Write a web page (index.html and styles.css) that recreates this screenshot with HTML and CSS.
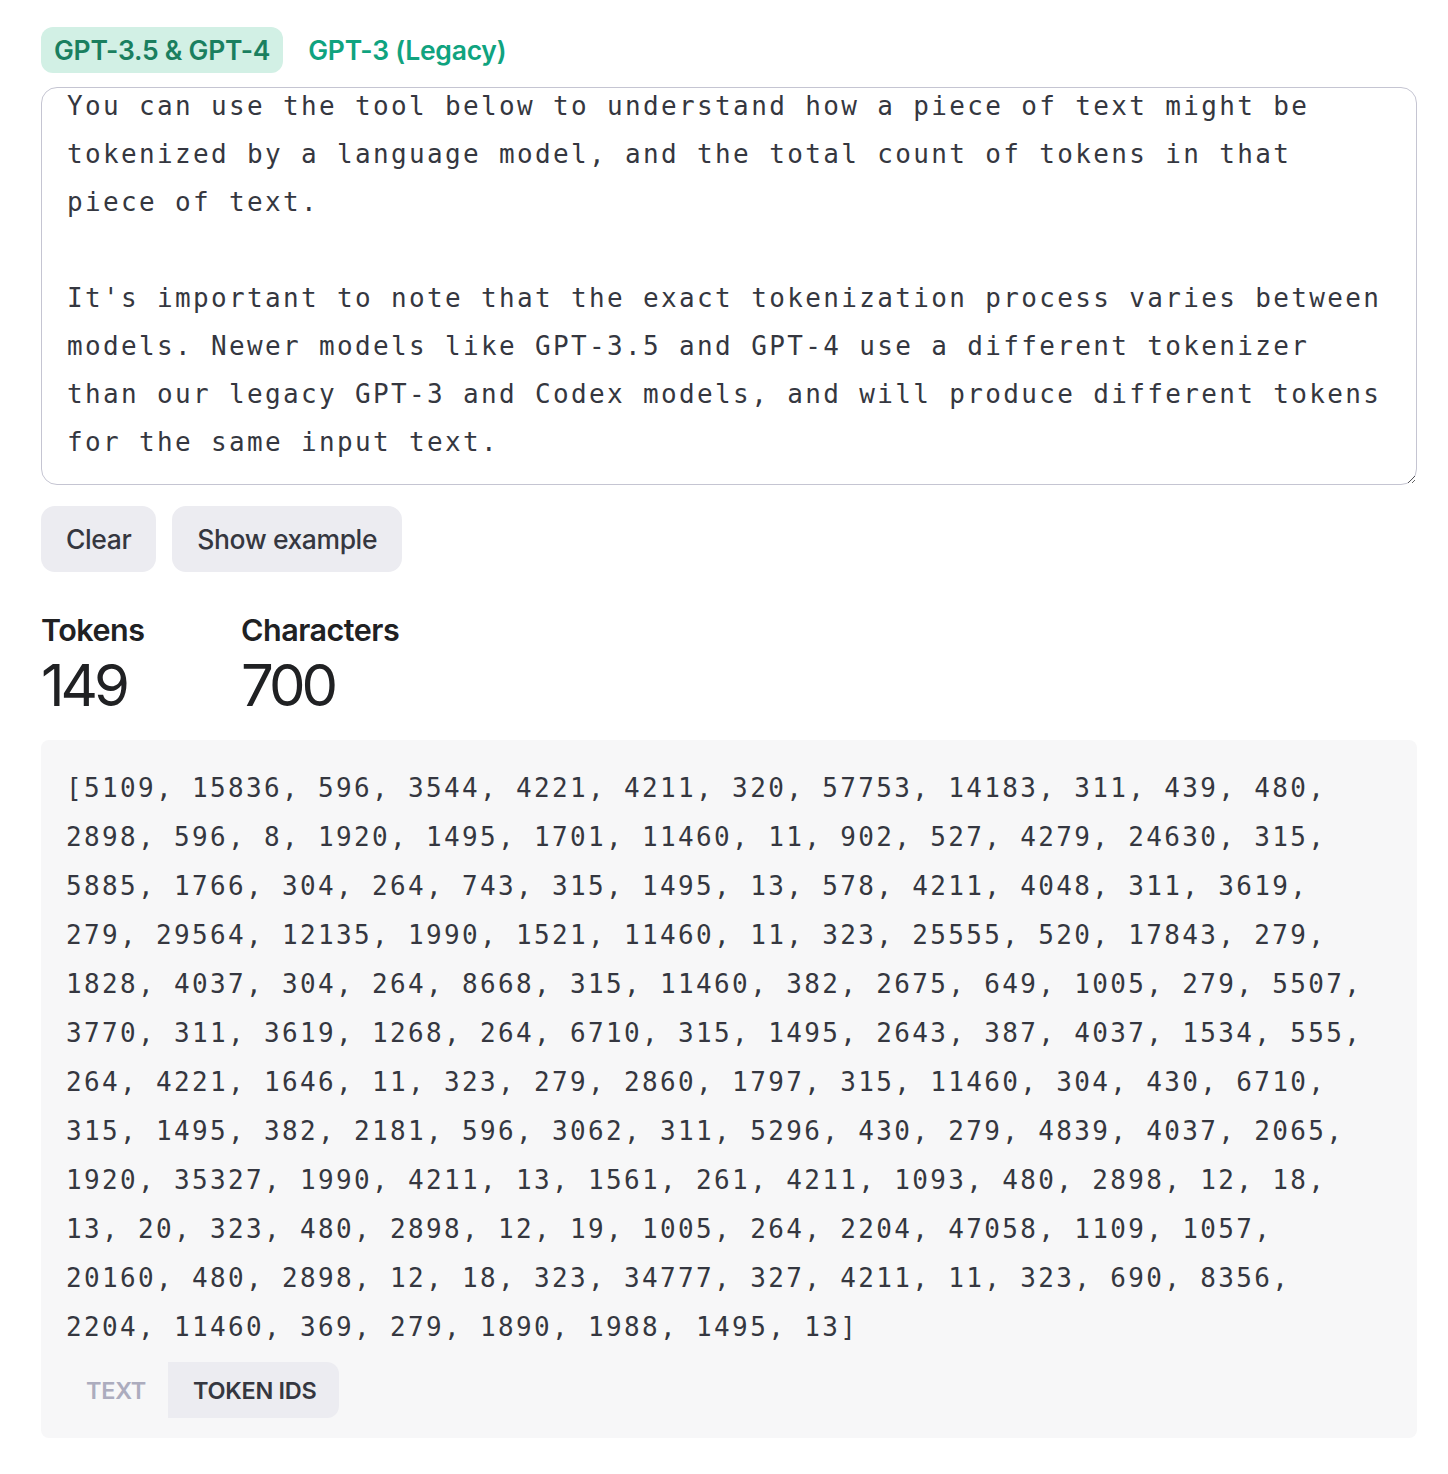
FILE: index.html
```html
<!DOCTYPE html>
<html lang="en">
<head>
<meta charset="utf-8">
<title>Tokenizer</title>
<link rel="stylesheet" href="styles.css">
<script src="script.js" defer></script>
</head>
<body>
<main class="page">
  <nav class="model-tabs">
    <button class="model-tab active">GPT-3.5 &amp; GPT-4</button>
    <button class="model-tab">GPT-3 (Legacy)</button>
  </nav>

  <textarea class="input" spellcheck="false">You can use the tool below to understand how a piece of text might be tokenized by a language model, and the total count of tokens in that piece of text.

It's important to note that the exact tokenization process varies between models. Newer models like GPT-3.5 and GPT-4 use a different tokenizer than our legacy GPT-3 and Codex models, and will produce different tokens for the same input text.</textarea>

  <div class="actions">
    <button class="btn">Clear</button>
    <button class="btn">Show example</button>
  </div>

  <div class="stats">
    <div class="stat stat-tokens">
      <div class="stat-label">Tokens</div>
      <div class="stat-value">149</div>
    </div>
    <div class="stat">
      <div class="stat-label">Characters</div>
      <div class="stat-value">700</div>
    </div>
  </div>

  <section class="output">
    <div class="token-ids">[5109, 15836, 596, 3544, 4221, 4211, 320, 57753, 14183, 311, 439, 480, 2898, 596, 8, 1920, 1495, 1701, 11460, 11, 902, 527, 4279, 24630, 315, 5885, 1766, 304, 264, 743, 315, 1495, 13, 578, 4211, 4048, 311, 3619, 279, 29564, 12135, 1990, 1521, 11460, 11, 323, 25555, 520, 17843, 279, 1828, 4037, 304, 264, 8668, 315, 11460, 382, 2675, 649, 1005, 279, 5507, 3770, 311, 3619, 1268, 264, 6710, 315, 1495, 2643, 387, 4037, 1534, 555, 264, 4221, 1646, 11, 323, 279, 2860, 1797, 315, 11460, 304, 430, 6710, 315, 1495, 382, 2181, 596, 3062, 311, 5296, 430, 279, 4839, 4037, 2065, 1920, 35327, 1990, 4211, 13, 1561, 261, 4211, 1093, 480, 2898, 12, 18, 13, 20, 323, 480, 2898, 12, 19, 1005, 264, 2204, 47058, 1109, 1057, 20160, 480, 2898, 12, 18, 323, 34777, 327, 4211, 11, 323, 690, 8356, 2204, 11460, 369, 279, 1890, 1988, 1495, 13]</div>
    <div class="view-toggle">
      <button class="seg seg-first">TEXT</button>
      <button class="seg seg-last active">TOKEN IDS</button>
    </div>
  </section>
</main>
</body>
</html>
```

FILE: styles.css
```css
* { box-sizing: border-box; }

html, body {
  margin: 0;
  padding: 0;
  background: #ffffff;
}

body {
  font-family: Inter, "Noto Sans", "Liberation Sans", sans-serif;
  color: #202123;
}

button {
  font-family: inherit;
  border: none;
  cursor: pointer;
}

.page {
  width: 1376px;
  margin-left: 41px;
  padding-top: 27px;
  display: flex;
  flex-direction: column;
}

.model-tabs {
  display: flex;
  gap: 12px;
  height: 46px;
}

.model-tab {
  background: transparent;
  color: #10a37f;
  font-size: 26.5px;
  font-weight: 600;
  letter-spacing: -0.25px;
  padding: 0 13px;
  border-radius: 12px;
  height: 46px;
}

.model-tab.active {
  background: #d2f0e5;
  color: #1a7f5f;
}

.input {
  margin-top: 14px;
  width: 100%;
  height: 398px;
  border: 1px solid #c5c5d2;
  border-radius: 16px;
  padding: 24px 30px 24px 25px;
  font-family: "DejaVu Sans Mono", "Liberation Mono", monospace;
  font-size: 26px;
  letter-spacing: 2.35px;
  line-height: 48px;
  color: #353740;
  overflow: hidden;
  resize: vertical;
  outline: none;
  display: block;
}

.actions {
  display: flex;
  gap: 16px;
  margin-top: 21px;
}

.btn {
  background: #ececf1;
  color: #353740;
  font-size: 26.5px;
  font-weight: 500;
  letter-spacing: -0.4px;
  height: 66px;
  padding: 0 25px;
  border-radius: 14px;
}

.stats {
  display: flex;
  margin-top: 40px;
}

.stat-tokens {
  width: 200px;
}

.stat-label {
  font-size: 30.5px;
  font-weight: 600;
  letter-spacing: -0.5px;
  line-height: 36px;
  margin-bottom: 4px;
  color: #202123;
}

.stat-value {
  font-size: 58px;
  font-weight: 400;
  letter-spacing: -4px;
  line-height: 66px;
  color: #202123;
}

.output {
  margin-top: 22px;
  background: #f7f7f8;
  border-radius: 8px;
  padding: 24px 40px 20px 25px;
}

.token-ids {
  font-family: "DejaVu Sans Mono", "Liberation Mono", monospace;
  font-size: 26px;
  letter-spacing: 2.35px;
  line-height: 49px;
  color: #353740;
}

.view-toggle {
  display: flex;
  margin-top: 10px;
}

.seg {
  background: transparent;
  color: #acacbe;
  font-size: 23.5px;
  font-weight: 600;
  letter-spacing: -0.3px;
  height: 56px;
  padding: 0 22px 0 20px;
}

.seg-first { border-radius: 12px 0 0 12px; }
.seg-last { border-radius: 0 12px 12px 0; padding: 0 23px 0 25px; }

.seg.active {
  background: #ececf1;
  color: #353740;
}
```

FILE: script.js
```js
document.querySelector('.input').scrollTop = 30;
```
